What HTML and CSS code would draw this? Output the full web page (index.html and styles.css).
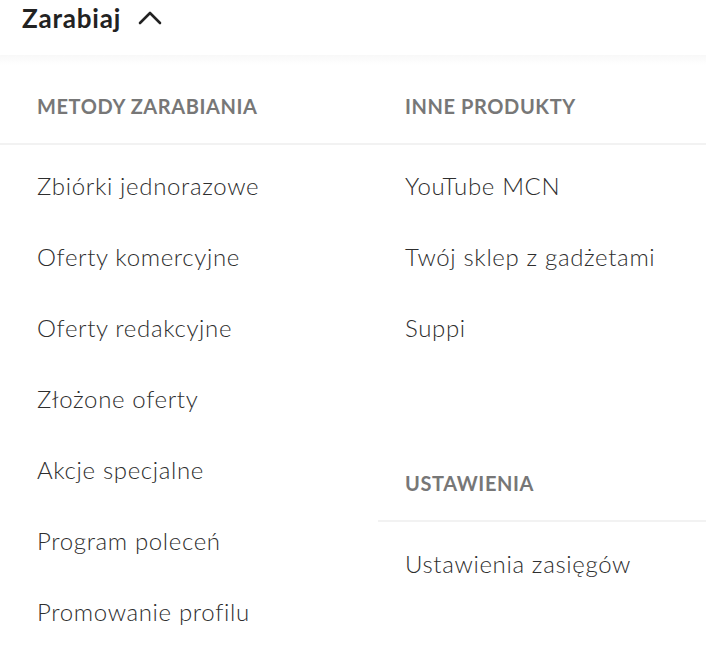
FILE: index.html
```html
<!DOCTYPE html>
<html lang="pl">
<head>
<meta charset="utf-8">
<link rel="stylesheet" href="styles.css">
</head>
<body>
<header class="top">
  <span class="title">Zarabiaj</span>
  <svg class="chev" width="24" height="16" viewBox="0 0 24 16"><path d="M2 13 L12 3 L22 13" fill="none" stroke="#222" stroke-width="2.6" stroke-linecap="round" stroke-linejoin="round"/></svg>
</header>
<div class="panel">
  <div class="col col-left">
    <section class="group">
      <h3 class="heading">METODY ZARABIANIA</h3>
      <ul class="items">
        <li>Zbiórki jednorazowe</li>
        <li>Oferty komercyjne</li>
        <li>Oferty redakcyjne</li>
        <li>Złożone oferty</li>
        <li>Akcje specjalne</li>
        <li>Program poleceń</li>
        <li>Promowanie profilu</li>
      </ul>
    </section>
  </div>
  <div class="col col-right">
    <section class="group">
      <h3 class="heading">INNE PRODUKTY</h3>
      <ul class="items">
        <li>YouTube MCN</li>
        <li>Twój sklep z gadżetami</li>
        <li>Suppi</li>
      </ul>
    </section>
    <section class="group group-settings">
      <h3 class="heading">USTAWIENIA</h3>
      <ul class="items items-settings">
        <li>Ustawienia zasięgów</li>
      </ul>
    </section>
  </div>
</div>
</body>
</html>
```

FILE: styles.css
```css
* { box-sizing: border-box; }
html, body { margin: 0; padding: 0; background: #fff; }
body { font-family: Lato, "Noto Sans", sans-serif; color: #333; width: 706px; height: 654px; overflow: hidden; }

.top { height: 55px; display: flex; align-items: center; padding: 0 0 20px 22px; gap: 17px; }
.title { font-size: 26px; line-height: 30px; font-weight: 700; color: #222; letter-spacing: 0.8px; }
.chev { display: block; margin-top: 1px; }

.panel { display: grid; grid-template-columns: 378px 328px; background: linear-gradient(#f8f8f8, #fff 10px); }
.col-left .heading, .col-left .items { padding-left: 37px; }
.col-right .heading, .col-right .items { padding-left: 27px; }

.heading { margin: 0; height: 90px; padding-top: 41px; font-size: 20px; line-height: 20px; font-weight: 700; color: #777; border-bottom: 2px solid #f2f2f2; letter-spacing: 0.6px; }
.items { list-style: none; margin: 0; padding-top: 5px; }
.items li { height: 71px; line-height: 71px; font-size: 24px; font-weight: 300; letter-spacing: 0.65px; color: #2e2e2e; }

.group-settings { margin-top: 69px; }
.items-settings { padding-top: 6px; }
```
